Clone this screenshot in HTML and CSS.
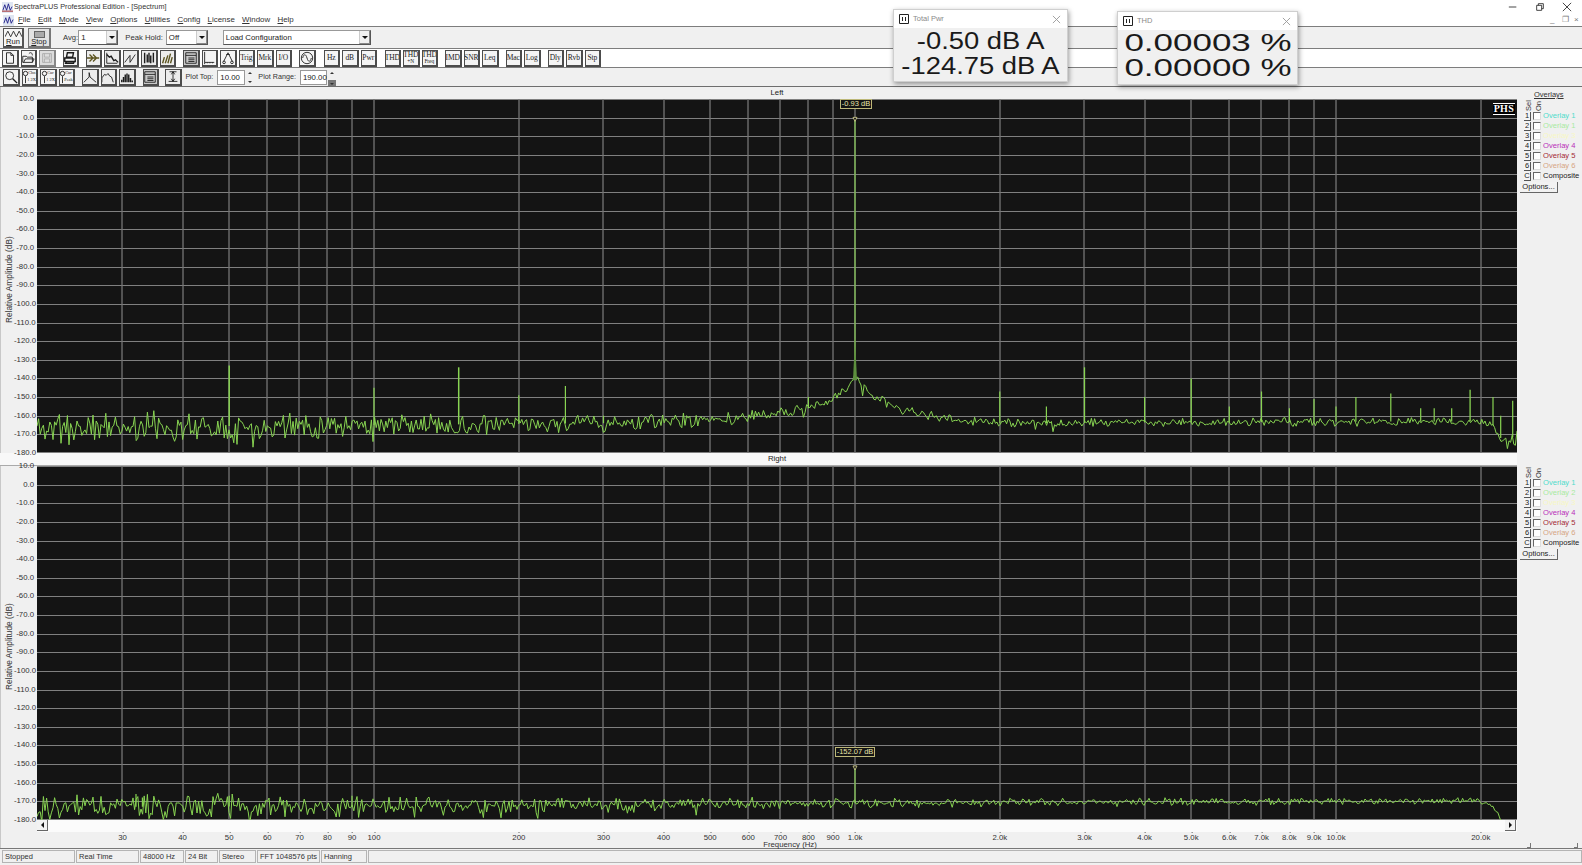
FILE: index.html
```html
<!DOCTYPE html>
<html lang="en">
<head>
<meta charset="utf-8">
<title>SpectraPLUS Professional Edition - [Spectrum]</title>
<link rel="stylesheet" href="styles.css">
</head>
<body>
<header class="titlebar">
  <svg class="app-ic" viewBox="0 0 12 12"><rect width="12" height="12" fill="#dfe6f2"/><path d="M1 9l2-6 2 6 2-7 2 7 2-4" stroke="#20208a" fill="none"/><path d="M0 10h12" stroke="#a02020"/></svg>
  <span class="title-text">SpectraPLUS Professional Edition - [Spectrum]</span>
  <div class="winctl">
    <svg viewBox="0 0 12 12"><path d="M1 6h9" stroke="#222"/></svg>
    <svg viewBox="0 0 12 12"><path d="M2 4h6v6H2zM4 4V2h6v6H8" stroke="#222" fill="none"/></svg>
    <svg viewBox="0 0 12 12"><path d="M1 1l10 10M11 1L1 11" stroke="#222" fill="none"/></svg>
  </div>
</header>
<nav class="menubar">
  <svg class="app-ic menu-ic" viewBox="0 0 12 12"><rect width="12" height="12" fill="#dfe6f2"/><path d="M1 9l2-6 2 6 2-7 2 7 2-4" stroke="#20208a" fill="none"/></svg>
  <span><u>F</u>ile</span><span><u>E</u>dit</span><span><u>M</u>ode</span><span><u>V</u>iew</span><span><u>O</u>ptions</span><span><u>U</u>tilities</span><span><u>C</u>onfig</span><span><u>L</u>icense</span><span><u>W</u>indow</span><span><u>H</u>elp</span>
  <div class="childctl"><b>_</b><b>&#10064;</b><b>&#215;</b></div>
</nav>

<section class="row row-main">
  <button class="big big-run">
    <svg viewBox="0 0 18 9"><path d="M0 8l3-6 3 6 3-6 3 6 3-6 3 6" fill="none" stroke="#333"/></svg>
    <span><u>R</u>un</span>
  </button>
  <button class="big big-stop">
    <i class="stop-box"></i>
    <span><u>S</u>top</span>
  </button>
  <label class="lbl lbl-avg">Avg:</label>
  <div class="combo combo-avg"><span>1</span><i class="arrow"></i></div>
  <label class="lbl lbl-peak">Peak Hold:</label>
  <div class="combo combo-peak"><span>Off</span><i class="arrow"></i></div>
  <div class="combo combo-load"><span>Load Configuration</span><i class="arrow"></i></div>
</section>

<section class="row row-tools">
  <div class="group">
    <button class="tb"><svg viewBox="0 0 16 16"><path d="M4 2h5l3 3v9H4zM9 2v3h3"/></svg></button>
    <button class="tb"><svg viewBox="0 0 16 16"><path d="M2 6h4l1 1h6v6H2zM3 13l2-4h10l-2 4M9 3c2-2 4-1 4 2" /></svg></button>
    <button class="tb tb-off"><svg viewBox="0 0 16 16"><path class="dim" d="M3 3h10v10H3zM5 3v4h6V3M5 13V9h6v4"/></svg></button>
  </div>
  <div class="group g-print">
    <button class="tb"><svg viewBox="0 0 16 16"><path class="thick" d="M5 2h7l-1 5H4zM2 8h12v4H2zM4 12l-1 2h9l1-2"/></svg></button>
  </div>
  <div class="group g-mode">
    <button class="tb tb-on"><svg viewBox="0 0 16 16"><path class="olive" d="M1 8h14M4 4l4 4-4 4M8 4l4 4-4 4"/></svg></button>
    <button class="tb tb-on"><svg viewBox="0 0 16 16"><path d="M2 2v12h12"/><path class="thick" d="M2 4l3 3 2-1 3 5 2-1 3 3"/></svg></button>
    <button class="tb tb-on"><svg viewBox="0 0 16 16"><path d="M2 13L8 5v8l6-9"/></svg></button>
    <button class="tb tb-on"><svg viewBox="0 0 16 16"><path class="thick" d="M3 2v12M6 4v9M8 2v11M10 5v9M13 2v11"/></svg></button>
    <button class="tb tb-on"><svg viewBox="0 0 16 16"><path class="olive thick" d="M3 14L5 7M6 14L9 5M9 14l3-11M12 14l2-7"/></svg></button>
  </div>
  <div class="group g-view">
    <button class="tb tb-pressed"><svg viewBox="0 0 16 16"><path d="M2 2h12v12H2zM2 5h12M5 8h7M5 10h7M5 12h7"/></svg></button>
    <button class="tb"><svg viewBox="0 0 16 16"><path d="M3 1v12h11M3 13v2M6 13v1M9 13v1M12 13v1"/></svg></button>
    <button class="tb"><svg viewBox="0 0 16 16"><path d="M8 2L3 12M8 2l5 10M6 4h4"/><circle cx="3.500" cy="13" r="1.500"/><circle cx="12.500" cy="13" r="1.500"/></svg></button>
    <button class="tb tb-text">Trig</button>
    <button class="tb tb-text">Mrk</button>
    <button class="tb tb-text">I/O</button>
  </div>
  <div class="group g-gen">
    <button class="tb tb-wide"><svg viewBox="0 0 16 16"><circle cx="8" cy="8" r="6.500"/><path d="M3 8c1.500-5 3.500-5 5 0s3.500 5 5 0"/></svg></button>
  </div>
  <div class="group g-unit">
    <button class="tb tb-text">Hz</button>
    <button class="tb tb-text">dB</button>
    <button class="tb tb-text">Pwr</button>
  </div>
  <div class="group g-thd">
    <button class="tb tb-text">THD</button>
    <button class="tb tb-text tb-two">THD<small>+N</small></button>
    <button class="tb tb-text tb-two">THD<small>Freq</small></button>
  </div>
  <div class="group g-imd">
    <button class="tb tb-text">IMD</button>
    <button class="tb tb-text">SNR</button>
    <button class="tb tb-text">Leq</button>
  </div>
  <div class="group g-imd">
    <button class="tb tb-text">Mac</button>
    <button class="tb tb-text">Log</button>
  </div>
  <div class="group g-imd">
    <button class="tb tb-text">Dly</button>
    <button class="tb tb-text">Rvb</button>
    <button class="tb tb-text">Stp</button>
  </div>
</section>

<section class="row row-plotbar">
  <div class="group">
    <button class="tb"><svg viewBox="0 0 16 16"><circle cx="6.500" cy="6.500" r="4.500"/><path class="thick" d="M10 10l5 5"/></svg></button>
    <button class="tb tb-chn"><svg viewBox="0 0 16 16"><circle cx="4" cy="4" r="2.500"/><path d="M4 7v8"/><text x="7" y="5">Chn</text><text x="6" y="13">1 2X</text></svg></button>
    <button class="tb tb-chn"><svg viewBox="0 0 16 16"><circle cx="4" cy="4" r="2.500"/><path d="M4 7v8"/><text x="7" y="5">Cur</text><text x="6" y="13">1 2X</text></svg></button>
    <button class="tb tb-chn"><svg viewBox="0 0 16 16"><circle cx="4" cy="4" r="2.500"/><path d="M4 7v8"/><text x="7" y="5">Cur</text><text x="6" y="13">Peak</text></svg></button>
  </div>
  <div class="group g-peak">
    <button class="tb tb-on"><svg viewBox="0 0 16 16"><path d="M1 14l6-6V3l1 5 7 6"/></svg></button>
    <button class="tb tb-on"><svg viewBox="0 0 16 16"><path d="M1 14V9l3-4 2 1 2-2 2 3 2 1 2 6"/></svg></button>
    <button class="tb tb-on"><svg viewBox="0 0 16 16"><path class="thick" d="M2 14V11M4 14V8M6 14V5M8 14V4M10 14V5M12 14V9M14 14v-2"/></svg></button>
  </div>
  <div class="group g-panel">
    <button class="tb tb-pressed"><svg viewBox="0 0 16 16"><path d="M2 2h12v12H2zM2 5h12M5 8h7M5 10h7M5 12h7"/></svg></button>
  </div>
  <div class="group g-ibeam">
    <button class="tb tb-on"><svg viewBox="0 0 16 16"><path d="M4 2h8M8 2v11M3 13h10M6 5l2-3 2 3M6 10l2 3 2-3"/></svg></button>
  </div>
  <label class="lbl lbl-top">Plot Top:</label>
  <div class="field field-top">10.00</div>
  <div class="spin"><i class="sp-up"></i><i class="sp-dn"></i></div>
  <label class="lbl lbl-range">Plot Range:</label>
  <div class="field field-range">190.00</div>
  <div class="spin spin-range"><i class="sp-up"></i><i class="sp-dn"></i></div>
</section>

<main class="main">
  <section class="panel">
    <div class="caption">Left</div>
    <div class="ovl-title">Overlays</div>
    <div class="yaxis"><span class="ytitle">Relative Amplitude (dB)</span><div class="yticks" data-axis></div></div>
    <div class="plot-wrap">
      <svg class="plot" id="plot-left" width="1480" height="354" viewBox="0 0 1480 354"></svg>
      <div class="phs">PHS</div>
      <div class="marker marker-l">-0.93 dB</div>
    </div>
    <aside class="side">
      <div class="side-head"><span>Sel</span><span>On</span></div>
      <div class="ov"><b class="sel">1</b><i class="chk"></i><span class="c1">Overlay 1</span></div>
      <div class="ov"><b class="sel">2</b><i class="chk"></i><span class="c2">Overlay 1</span></div>
      <div class="ov"><b class="sel">3</b><i class="chk"></i><span class="c3">Overlay 3</span></div>
      <div class="ov"><b class="sel">4</b><i class="chk"></i><span class="c4">Overlay 4</span></div>
      <div class="ov"><b class="sel">5</b><i class="chk"></i><span class="c5">Overlay 5</span></div>
      <div class="ov"><b class="sel">6</b><i class="chk"></i><span class="c6">Overlay 6</span></div>
      <div class="ov"><b class="sel">C</b><i class="chk"></i><span>Composite</span></div>
      <button class="options">Options...</button>
    </aside>
  </section>

  <section class="panel panel-r">
    <div class="caption">Right</div>
    <div class="ovl-title"></div>
    <div class="yaxis"><span class="ytitle">Relative Amplitude (dB)</span><div class="yticks" data-axis></div></div>
    <div class="plot-wrap">
      <svg class="plot" id="plot-right" width="1480" height="354" viewBox="0 0 1480 354"></svg>
      <div class="marker marker-r">-152.07 dB</div>
    </div>
    <aside class="side">
      <div class="side-head"><span>Sel</span><span>On</span></div>
      <div class="ov"><b class="sel">1</b><i class="chk"></i><span class="c1">Overlay 1</span></div>
      <div class="ov"><b class="sel">2</b><i class="chk"></i><span class="c2">Overlay 2</span></div>
      <div class="ov"><b class="sel">3</b><i class="chk"></i><span class="c3">Overlay 3</span></div>
      <div class="ov"><b class="sel">4</b><i class="chk"></i><span class="c4">Overlay 4</span></div>
      <div class="ov"><b class="sel">5</b><i class="chk"></i><span class="c5">Overlay 5</span></div>
      <div class="ov"><b class="sel">6</b><i class="chk"></i><span class="c6">Overlay 6</span></div>
      <div class="ov"><b class="sel">C</b><i class="chk"></i><span>Composite</span></div>
      <button class="options">Options...</button>
    </aside>
  </section>

  <section class="foot">
    <div class="foot-mid">
      <div class="hscroll">
        <button class="sbtn"><i class="tri-l"></i></button>
        <div class="track"></div>
        <button class="sbtn"><i class="tri-r"></i></button>
      </div>
      <div class="xticks" id="xticks"></div>
      <div class="xtitle">Frequency (Hz)</div>
    </div>
    <div class="foot-right"><i class="grip"></i><i class="grip"></i></div>
  </section>
</main>

<footer class="status">
  <span class="s1">Stopped</span><span class="s2">Real Time</span><span class="s3">48000 Hz</span><span class="s4">24 Bit</span><span class="s5">Stereo</span><span class="s6">FFT 1048576 pts</span><span class="s7">Hanning</span><span class="s8"></span>
</footer>

<div class="meter meter-pwr">
  <div class="meter-bar">
    <svg class="pause" viewBox="0 0 10 10"><path d="M.5.5h9v9h-9zM3.500 3v4M6.500 3v4"/></svg>
    <span class="meter-name">Total Pwr</span>
    <svg class="close" viewBox="0 0 10 10"><path d="M1 1l8 8M9 1L1 9"/></svg>
  </div>
  <div class="meter-body">
    <div class="val val-pwr">-0.50 dB A</div>
    <div class="val val-pwr">-124.75 dB A</div>
  </div>
</div>
<div class="meter meter-thd">
  <div class="meter-bar">
    <svg class="pause" viewBox="0 0 10 10"><path d="M.5.5h9v9h-9zM3.500 3v4M6.500 3v4"/></svg>
    <span class="meter-name">THD</span>
    <svg class="close" viewBox="0 0 10 10"><path d="M1 1l8 8M9 1L1 9"/></svg>
  </div>
  <div class="meter-body">
    <div class="val val-thd">0.00003 %</div>
    <div class="val val-thd">0.00000 %</div>
  </div>
</div>
<script src="app.js"></script>
</body>
</html>
```

FILE: styles.css
```css
* { box-sizing: border-box; }
html, body { margin: 0; padding: 0; }
body {
  position: relative;
  width: 1582px;
  height: 865px;
  overflow: hidden;
  background: #f0f0f0;
  color: #222;
  font: 8px/1 "Liberation Sans", Arial, sans-serif;
  display: flex;
  flex-direction: column;
}
button { font: inherit; color: inherit; padding: 0; margin: 0; }
u { text-decoration: underline; }

.titlebar {
  height: 14px;
  background: #fff;
  display: flex;
  align-items: center;
  padding-left: 2px;
  flex: none;
}
.app-ic { width: 11px; height: 11px; flex: none; }
.title-text { margin-left: 1px; font-size: 7.300px; color: #333; }
.winctl { margin-left: auto; display: flex; gap: 17px; padding-right: 10px; }
.winctl svg { width: 10px; height: 10px; }

.menubar {
  height: 12px;
  background: #fff;
  display: flex;
  align-items: center;
  flex: none;
  padding-left: 3px;
  color: #333;
  font-size: 7.900px;
}
.menu-ic { margin-right: 4px; }
.menubar > span { margin-right: 7.300px; }
.childctl { margin-left: auto; display: flex; gap: 6px; padding-right: 2px; color: #777; }
.childctl b { font-weight: normal; font-size: 8px; width: 6px; }

.row {
  display: flex;
  align-items: center;
  flex: none;
  border-top: 1px solid #7d7d7d;
}
.row-main { height: 22px; padding-left: 3px; background: #f0f0f0; }
.row-tools { height: 19px; padding-left: 2px; background: #fff; }
.row-plotbar { height: 19px; padding-left: 3px; background: #f0f0f0; }

.big {
  width: 21px;
  height: 20px;
  background: #f6f6f6;
  border: 1px solid #555;
  border-right-width: 2px;
  border-bottom-width: 2px;
  display: flex;
  flex-direction: column;
  align-items: center;
  justify-content: space-between;
  font-size: 7.500px;
}
.big svg { width: 17px; height: 9px; }
.big-stop { width: 23px; margin-left: 4px; background: #e2e2e2; border-color: #777; }
.stop-box { width: 11px; height: 7px; background: #aaa; border: 1px solid #666; margin-top: 2px; display: block; }

.lbl { font-size: 7.700px; color: #333; flex: none; }
.lbl-avg { margin-left: 12px; }
.lbl-peak { margin-left: 7px; }
.lbl-top { margin-left: 4px; font-size: 7.200px; }
.lbl-range { margin-left: 4px; font-size: 7.200px; }

.combo {
  height: 15px;
  background: #fff;
  border: 1px solid #999;
  border-right-color: #555;
  border-bottom-color: #555;
  display: flex;
  align-items: center;
  justify-content: space-between;
  padding-left: 2px;
  font-size: 7.800px;
  flex: none;
}
.combo-avg { width: 40px; margin-left: 0; }
.combo-peak { width: 42px; margin-left: 3px; }
.combo-load { width: 148px; margin-left: 15px; }
.arrow {
  width: 11px;
  height: 13px;
  background: #f0f0f0;
  border-left: 1px solid #ccc;
  border-right: 1px solid #888;
  border-bottom: 1px solid #888;
  position: relative;
  display: block;
}
.arrow::after {
  content: "";
  position: absolute;
  left: 2px;
  top: 5px;
  border: 3px solid transparent;
  border-top-color: #111;
  border-bottom: 0;
}

.group { display: flex; gap: 2px; flex: none; }
.g-print { margin-left: 7px; }
.g-mode { margin-left: 6.500px; }
.g-view { margin-left: 7px; }
.g-gen { margin-left: 6.500px; }
.g-unit { margin-left: 7.500px; }
.g-thd { margin-left: 7.500px; }
.g-imd { margin-left: 7px; }
.g-peak { margin-left: 7px; }
.g-panel { margin-left: 7px; }
.g-ibeam { margin-left: 6px; }

.tb {
  width: 16.500px;
  height: 17px;
  background: #f4f4f4;
  border: 1px solid #4c4c4c;
  border-right-width: 2px;
  border-bottom-width: 2px;
  display: flex;
  align-items: center;
  justify-content: center;
  flex-direction: column;
  flex: none;
  overflow: hidden;
}
.tb-wide { width: 17.500px; }
.tb-on { background: #ececec; }
.tb-off { background: #ddd; border-color: #888; }
.tb-pressed { background: #c9c9c9; }
.tb svg { width: 14px; height: 14px; fill: none; stroke: #1c1c1c; stroke-width: 1; overflow: visible; }
.tb svg .thick { stroke-width: 1.600; }
.tb svg .olive { stroke: #5c5420; stroke-width: 1.600; }
.tb svg .dim { stroke: #aaa; }
.tb-text {
  font: 7.500px/1 "Liberation Serif", "DejaVu Serif", serif;
  color: #222;
  letter-spacing: -0.1px;
}
.tb-two { line-height: 7px; }
.tb-two small { font-size: 5.500px; line-height: 6px; display: block; }
.tb-chn svg text { font: 5px "Liberation Serif", serif; fill: #222; stroke: none; }

.field {
  height: 15px;
  background: #fff;
  border: 1px solid #999;
  font-size: 7.800px;
  line-height: 13px;
  padding-left: 2px;
  flex: none;
}
.field-top { width: 28px; margin-left: 4px; }
.field-range { width: 27px; margin-left: 4px; }
.spin { width: 8px; height: 15px; margin-left: 1px; display: flex; flex-direction: column; justify-content: space-between; align-items: center; padding: 2px 0; flex: none; }
.spin i { display: block; border: 2.500px solid transparent; }
.sp-up { border-bottom-color: #333 !important; border-top: 0 !important; }
.sp-dn { border-top-color: #333 !important; border-bottom: 0 !important; }
.spin-range { height: 17px; margin-top: 3px; background: linear-gradient(#f0f0f0 60%, #777 60%); }

.main {
  flex: none;
  border-top: 1px solid #6e6e6e;
  box-shadow: inset 1px 0 #c8c8c8;
  height: 762px;
  display: flex;
  flex-direction: column;
}
.panel {
  display: grid;
  grid-template-columns: 37px 1480px 65px;
  grid-template-rows: 12px 354px;
  flex: none;
}
.panel-r { grid-template-rows: 13px 354px; }
.caption {
  grid-column: 2;
  text-align: center;
  line-height: 12px;
  font-size: 7.800px;
  color: #222;
}
.panel-r .caption { background: #f8f8f8; border-bottom: 1px solid #aaa; }
.panel-r::before {
  content: "";
  grid-column: 1;
  grid-row: 1;
  background: #f8f8f8;
  border-bottom: 1px solid #aaa;
}
.ovl-title {
  padding-left: 17px;
  padding-top: 4px;
  font-size: 7.500px;
  text-decoration: underline;
  color: #333;
}
.yaxis { grid-column: 1; display: flex; height: 354px; position: relative; }
.ytitle {
  writing-mode: vertical-rl;
  transform: translateY(4px) rotate(180deg);
  width: 18px;
  margin-right: -4px;
  text-align: center;
  font-size: 8.300px;
  color: #333;
  flex: none;
  line-height: 18px;
}
.yticks {
  flex: 1;
  min-width: 0;
  display: flex;
  flex-direction: column;
  justify-content: space-between;
  height: 354px;
  font-size: 7.800px;
  color: #333;
}
.yticks span { height: 0; line-height: 0; text-align: right; padding-right: 3px; display: block; white-space: nowrap; }
.plot-wrap { position: relative; width: 1480px; height: 354px; }
.plot { display: block; background: #141414; }
.phs {
  position: absolute;
  right: 2px;
  top: 4px;
  color: #fff;
  font: bold 10px/10px "Liberation Serif", serif;
  letter-spacing: .3px;
  border-top: 1px solid #fff;
  border-bottom: 1px solid #fff;
  background: #000;
  padding: 0 1px;
}
.marker {
  position: absolute;
  height: 10px;
  border: 1px solid #bdb878;
  color: #e8e4a8;
  background: #141414;
  font-size: 7.500px;
  line-height: 8px;
  text-align: center;
}
.marker-l { left: 803px; top: 0; width: 32px; }
.marker-r { left: 798px; top: 281px; width: 40px; }

.side { padding-left: 7px; position: relative; }
.side-head { height: 12px; display: flex; }
.side-head span {
  writing-mode: vertical-rl;
  transform: rotate(180deg);
  font-size: 7.500px;
  width: 9px;
  line-height: 9px;
  margin-right: 1px;
  color: #333;
}
.ov { height: 10px; display: flex; align-items: center; font-size: 7.600px; white-space: nowrap; }
.sel {
  width: 7px;
  height: 9px;
  font-weight: normal;
  font-size: 7.500px;
  text-align: center;
  line-height: 8px;
  background: #f4f4f4;
  border-right: 1px solid #555;
  border-bottom: 1px solid #555;
  flex: none;
}
.chk {
  width: 8px;
  height: 8px;
  margin: 0 2px;
  background: #fff;
  border-top: 1px solid #666;
  border-left: 1px solid #666;
  border-right: 1px solid #ddd;
  border-bottom: 1px solid #ddd;
  flex: none;
}
.c1 { color: #4fdccb; }
.c2 { color: #a8eaa0; }
.c3 { color: #f7f7c4; }
.c4 { color: #b92fb9; }
.c5 { color: #a52a35; }
.c6 { color: #d6a583; }
.options {
  display: block;
  margin: 1px 0 0 -4px;
  width: 38px;
  height: 11px;
  background: #f2f2f2;
  border: 0;
  border-right: 1px solid #666;
  border-bottom: 1px solid #666;
  font-size: 7.600px;
  line-height: 10px;
}

.foot {
  flex: none;
  height: 28px;
  margin-left: 37px;
  display: flex;
}
.foot-mid { width: 1480px; flex: none; position: relative; }
.hscroll { height: 12px; display: flex; background: #fbfbfb; }
.track { flex: 1; }
.sbtn {
  width: 11px;
  height: 11px;
  background: #f2f2f2;
  border: 0;
  border-right: 1px solid #666;
  border-bottom: 1px solid #666;
  display: flex;
  align-items: center;
  justify-content: center;
  flex: none;
}
.sbtn:last-child { margin-right: 1px; }
.tri-l { border: 3px solid transparent; border-right-color: #111; border-left: 0; display: block; }
.tri-r { border: 3px solid transparent; border-left-color: #111; border-right: 0; display: block; }
.xticks { position: relative; height: 10px; }
.xticks span {
  position: absolute;
  top: 2px;
  transform: translateX(-50%);
  font-size: 7.800px;
  line-height: 8px;
  color: #333;
  white-space: nowrap;
}
.xticks span::before {
  content: "";
  position: absolute;
  left: 50%;
  top: -2px;
  width: 1px;
  height: 1px;
  background: #666;
}
.xtitle { text-align: center; padding-left: 26px; font-size: 7.800px; line-height: 6px; color: #333; }
.foot-right { flex: 1; display: flex; justify-content: space-between; align-items: flex-end; padding: 0 4px 0 10px; }
.grip { width: 4px; height: 5px; border-right: 1px solid #777; border-bottom: 1px solid #777; display: block; }

.status {
  flex: none;
  display: flex;
  height: 17px;
  padding: 1px 0 0 2px;
  border-top: 1px solid #777;
  background: #f0f0f0;
  font-size: 7.500px;
  color: #333;
}
.status span {
  height: 13px;
  border: 1px solid #b4b4b4;
  line-height: 11px;
  padding-left: 2px;
  margin-right: 1px;
  flex: none;
  white-space: nowrap;
}
.s1 { width: 73px; }
.s2 { width: 63px; }
.s3 { width: 44px; }
.s4 { width: 33px; }
.s5 { width: 37px; }
.s6 { width: 63px; }
.s7 { width: 46px; }
.status .s8 { flex: 1; margin-right: 0; }

.meter {
  position: absolute;
  background: #f0f0f0;
  border: 1px solid #cfcfcf;
  box-shadow: 1px 2px 5px rgba(0, 0, 0, .4);
  display: flex;
  flex-direction: column;
}
.meter-pwr { left: 893px; top: 9px; width: 175px; height: 73px; }
.meter-thd { left: 1117px; top: 11px; width: 181px; height: 74px; }
.meter-bar {
  height: 18px;
  background: #fff;
  display: flex;
  align-items: center;
  padding: 0 6px 0 5px;
  flex: none;
}
.pause { width: 10px; height: 10px; fill: none; stroke: #222; flex: none; }
.meter-name { margin-left: 4px; font-size: 7.500px; color: #8a8a8a; }
.close { width: 9px; height: 9px; margin-left: auto; fill: none; stroke: #999; flex: none; }
.meter-body { flex: 1; display: flex; flex-direction: column; align-items: center; padding-top: 1px; }
.val { font-size: 23px; line-height: 24.500px; color: #1a1a1a; white-space: nowrap; }
.val-pwr { transform: scaleX(1.190); }
.val-thd { transform: scaleX(1.520); }
```

FILE: app.js
```js
(function () {
  var W = 1480, H = 354;
  var NS = 'http://www.w3.org/2000/svg';
  function xOf(f) { return 818 + 481 * Math.log10(f / 1000); }
  function yOf(db) { return (10 - db) * H / 190; }
  function rng(seed) {
    return function () {
      seed |= 0; seed = seed + 0x6D2B79F5 | 0;
      var t = Math.imul(seed ^ seed >>> 15, 1 | seed);
      t = t + Math.imul(t ^ t >>> 7, 61 | t) ^ t;
      return ((t ^ t >>> 14) >>> 0) / 4294967296;
    };
  }
  function interp(tb, f) {
    var lf = Math.log10(f);
    if (f <= tb[0][0]) return tb[0][1];
    for (var i = 1; i < tb.length; i++) {
      if (f <= tb[i][0]) {
        var a = Math.log10(tb[i - 1][0]), b = Math.log10(tb[i][0]);
        return tb[i - 1][1] + (tb[i][1] - tb[i - 1][1]) * (lf - a) / (b - a);
      }
    }
    return tb[tb.length - 1][1];
  }
  function add(svg, name, attrs) {
    var el = document.createElementNS(NS, name);
    for (var k in attrs) el.setAttribute(k, attrs[k]);
    svg.appendChild(el);
    return el;
  }
  var TICKS = [30, 40, 50, 60, 70, 80, 90, 100, 200, 300, 400, 500, 600, 700, 800, 900, 1000,
    2000, 3000, 4000, 5000, 6000, 7000, 8000, 9000, 10000, 20000];

  function grid(svg) {
    var d = '';
    for (var db = 10; db >= -180; db -= 10) {
      var y = Math.min(Math.round(yOf(db)), H - 1) + .5;
      d += 'M0 ' + y + 'H' + W;
    }
    add(svg, 'path', { d: d, stroke: '#808080', 'stroke-width': 1, fill: 'none' });
    d = '';
    TICKS.forEach(function (f) {
      var x = Math.round(xOf(f));
      d += 'M' + x + ' 0V' + H;
    });
    add(svg, 'path', { d: d, stroke: '#757575', 'stroke-width': 1.300, fill: 'none' });
  }

  function trace(svg, opt) {
    var r = rng(opt.seed), pts = [];
    for (var x = 0; x <= W; x += 1.600) {
      var f = 1000 * Math.pow(10, (x - 818) / 481);
      var base = interp(opt.floor, f);
      var n = (r() + r() - 1) * interp(opt.amp, f);
      if (r() < .06) n -= r() * interp(opt.amp, f) * 1.100;
      pts.push(x.toFixed(1) + ',' + yOf(base + n).toFixed(1));
    }
    var col = '#88d452';
    opt.spikes.forEach(function (s) {
      var x = xOf(s[0]);
      add(svg, 'path', {
        d: 'M' + x.toFixed(1) + ' ' + yOf(interp(opt.floor, s[0])).toFixed(1) + 'V' + yOf(s[1]).toFixed(1),
        stroke: col, 'stroke-width': s[2] || 1.200, fill: 'none'
      });
    });
    add(svg, 'polyline', { points: pts.join(' '), fill: 'none', stroke: col, 'stroke-width': 1 });
  }

  function marker(svg, f, db) {
    var x = xOf(f), y = yOf(db);
    add(svg, 'path', {
      d: 'M' + (x - 2) + ' ' + (y - 2) + 'h4l-2 4z', fill: '#141414', stroke: '#d8d490', 'stroke-width': .8
    });
  }

  document.querySelectorAll('[data-axis]').forEach(function (el) {
    var html = '';
    for (var db = 10; db >= -180; db -= 10) html += '<span>' + db.toFixed(1) + '</span>';
    el.innerHTML = html;
  });

  var xt = document.getElementById('xticks');
  TICKS.forEach(function (f) {
    var s = document.createElement('span');
    s.style.left = xOf(f).toFixed(1) + 'px';
    s.textContent = f < 1000 ? f : (f / 1000).toFixed(1) + 'k';
    xt.appendChild(s);
  });

  var left = document.getElementById('plot-left');
  grid(left);
  trace(left, {
    seed: 11,
    floor: [[20, -166], [60, -165.5], [300, -164], [500, -162], [700, -159], [800, -156], [900, -151],
      [970, -144], [1000, -138], [1040, -144], [1100, -150], [1150, -153], [1300, -158], [1600, -162],
      [2000, -164], [18000, -163], [20400, -163], [21200, -165], [22000, -172], [23000, -173], [24000, -168]],
    amp: [[20, 10], [40, 9], [100, 6.500], [300, 5], [700, 3.500], [1500, 2.800], [20000, 2.400], [21500, 3], [22500, 6], [24000, 7]],
    spikes: [[50, -133, 1.500], [100, -145], [150, -134, 1.500], [200, -149], [250, -144], [300, -160], [800, -150], [1100, -150],
      [2000, -147], [2500, -155], [3000, -134, 1.300], [4000, -150], [5000, -140, 1.300], [6000, -155], [7000, -147],
      [8000, -156], [9000, -151], [10000, -155], [11000, -150], [13000, -148], [15000, -156], [16000, -156], [17400, -156],
      [19000, -146, 1.300], [21200, -150], [22000, -160], [23300, -152], [1000, -0.93, 1.100]]
  });
  add(left, 'path', { d: 'M' + (xOf(1000) - 2) + ' ' + yOf(-141) + 'L' + xOf(1000) + ' ' + yOf(-118) + 'L' + (xOf(1000) + 2) + ' ' + yOf(-141) + 'z', fill: '#5d8f3e' });
  marker(left, 1000, -0.93);

  var right = document.getElementById('plot-right');
  grid(right);
  trace(right, {
    seed: 29,
    floor: [[20, -173], [100, -172.500], [300, -172], [600, -171], [1000, -171], [2000, -170.500], [10000, -170],
      [20000, -169.500], [20600, -170.500], [21200, -173], [22000, -179], [22500, -195], [24000, -230]],
    amp: [[20, 8], [100, 6.500], [300, 5], [1000, 3], [3000, 2.400], [20000, 1.800], [24000, .5]],
    spikes: [[1000, -152.07, 1.100], [32, -166], [33, -168], [50, -167], [90, -167]]
  });
  marker(right, 1000, -152.07);
})();
```
